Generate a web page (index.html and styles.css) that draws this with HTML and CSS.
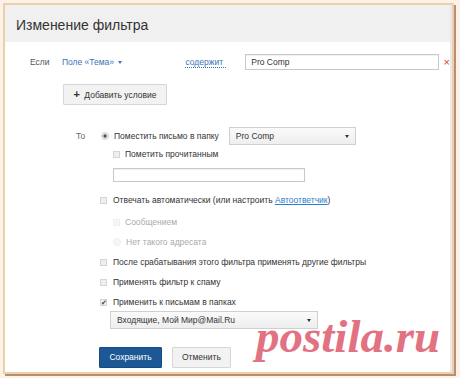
FILE: index.html
```html
<!DOCTYPE html>
<html lang="ru">
<head>
	<meta charset="UTF-8">
	<title>Изменение фильтра</title>
	<link rel="stylesheet" href="styles.css">
</head>
<body>
	<div class="frame">
		<div class="dialog">
			<div class="dialog-head">Изменение фильтра</div>

			<div class="cond-row">
				<span class="cond-label">Если</span>
				<span class="field-pick">Поле «Тема» <i class="caret"></i></span>
				<span class="op-pick">содержит</span>
				<span class="text-input cond-input">Pro Comp</span>
				<span class="remove">&times;</span>
			</div>

			<div class="add-row">
				<span class="btn btn-light add-btn"><b>+</b> Добавить условие</span>
			</div>

			<div class="action-block">
				<div class="line first-line">
					<span class="to-label">То</span>
					<span class="radio checked"></span>
					<span class="opt-text">Поместить письмо в папку</span>
					<span class="select folder-select">Pro Comp <i class="caret"></i></span>
				</div>
				<div class="line sub">
					<span class="check"></span>
					<span class="opt-text">Пометить прочитанным</span>
				</div>
				<div class="sub-input">
					<span class="text-input empty-input"></span>
				</div>
				<div class="line spaced">
					<span class="check"></span>
					<span class="opt-text">Отвечать автоматически (или настроить <a href="#">Автоответчик</a>)</span>
				</div>
				<div class="line sub disabled">
					<span class="check"></span>
					<span class="opt-text">Сообщением</span>
				</div>
				<div class="line sub disabled">
					<span class="radio"></span>
					<span class="opt-text">Нет такого адресата</span>
				</div>
				<div class="line">
					<span class="check"></span>
					<span class="opt-text">После срабатывания этого фильтра применять другие фильтры</span>
				</div>
				<div class="line">
					<span class="check"></span>
					<span class="opt-text">Применять фильтр к спаму</span>
				</div>
				<div class="line tight">
					<span class="check ticked">&#10004;</span>
					<span class="opt-text">Применить к письмам в папках</span>
				</div>
				<div class="sub-select">
					<span class="select folders-select">Входящие, Мой Мир@Mail.Ru <i class="caret"></i></span>
				</div>
			</div>

			<div class="buttons">
				<span class="btn btn-primary">Сохранить</span>
				<span class="btn btn-light">Отменить</span>
			</div>

			<div class="watermark">postila.ru</div>
		</div>
	</div>
</body>
</html>
```

FILE: styles.css
```css
* {
	margin: 0;
	padding: 0;
	box-sizing: border-box;
}
body {
	width: 460px;
	height: 378px;
	background: #fbf3ea;
	font-family: "Liberation Sans", Arial, sans-serif;
	font-size: 8.5px;
	color: #333;
	overflow: hidden;
}
.frame {
	margin: 3px 0 0 3px;
	width: 451px;
	height: 371px;
	border: 2px solid #efcfa9;
	box-shadow: 2px 2px 0 #b98f73;
}
.dialog {
	position: relative;
	height: 100%;
	overflow: hidden;
	background: #fff;
	border-right: 2px solid #e9e9e9;
}
.dialog-head {
	height: 37px;
	background: #f0f0f0;
	padding: 12px 0 0 11px;
	font-size: 14px;
	color: #333;
}

/* condition */
.cond-row {
	display: flex;
	align-items: center;
	height: 16px;
	margin-top: 12px;
}
.cond-label {
	margin-left: 25px;
	width: 32px;
	color: #555;
}
.field-pick {
	color: #3c73b8;
	width: 124px;
}
.op-pick {
	color: #3c73b8;
	border-bottom: 1px dotted #3c73b8;
	line-height: 10px;
	width: 41px;
	margin-right: 19px;
}
.cond-input {
	width: 194px;
}
.remove {
	color: #d4402f;
	font-size: 11px;
	margin-left: 5px;
}
.caret {
	display: inline-block;
	border-left: 2.5px solid transparent;
	border-right: 2.5px solid transparent;
	border-top: 3px solid #333;
	vertical-align: middle;
	margin-left: 2px;
}
.field-pick .caret {
	border-top-color: #3c73b8;
}
.text-input {
	display: block;
	height: 16px;
	border: 1px solid #c8c8c8;
	box-shadow: inset 0 1px 1px rgba(0,0,0,.06);
	padding: 2px 5px;
	color: #333;
}

/* buttons */
.add-row {
	margin: 14px 0 0 58px;
}
.btn {
	display: inline-block;
	height: 21px;
	line-height: 19px;
	padding: 0 9px;
	border: 1px solid #d6d6d6;
	border-radius: 1px;
	white-space: nowrap;
	text-align: center;
}
.btn-light {
	background: #f2f2f2;
	color: #333;
}
.add-btn {
	width: 104px;
	padding: 0;
}
.add-btn b {
	font-weight: bold;
	font-size: 11px;
	margin-right: 2px;
}
.btn-primary {
	background: #1b5895;
	border-color: #174c82;
	color: #fff;
	width: 63px;
}

/* actions */
.action-block {
	margin: 22px 0 0 0;
}
.line {
	display: flex;
	align-items: center;
	height: 12px;
	margin-bottom: 8px;
	padding-left: 95px;
}
.first-line {
	padding-left: 71px;
	height: 18px;
	margin-bottom: 3px;
}
.to-label {
	width: 25px;
	color: #666;
}
.sub {
	padding-left: 108px;
}
.line.spaced {
	margin-bottom: 10px;
}
.line.tight {
	margin-bottom: 3px;
}
.check,
.radio {
	flex: none;
	width: 7px;
	height: 7px;
	border: 1px solid #d5d5d5;
	background: #eeeeee;
	margin-right: 6px;
	font-size: 7px;
	line-height: 6px;
	text-align: center;
	color: #444;
}
.sub .check,
.sub .radio {
	margin-right: 5px;
}
.radio {
	width: 8px;
	height: 8px;
	border-radius: 50%;
	margin-right: 5px;
}
.radio.checked {
	background: radial-gradient(circle, #555 0 1.3px, #e6e6e6 2px);
}
.opt-text {
	white-space: nowrap;
	color: #333;
}
.opt-text a {
	color: #2a7ed0;
	text-decoration: underline;
}
.disabled .opt-text {
	color: #aaa;
}
.disabled .check,
.disabled .radio {
	background: #f6f6f6;
	border-color: #f0f0f0;
}
.select {
	display: flex;
	align-items: center;
	justify-content: space-between;
	height: 18px;
	padding: 0 6px;
	border: 1px solid #d0d0d0;
	background: linear-gradient(#fafafa, #eeeeee);
	color: #333;
}
.folder-select {
	width: 127px;
	margin-left: 10px;
}
.sub-input {
	padding-left: 108px;
	margin: 1px 0 12px;
}
.empty-input {
	width: 192px;
	height: 14px;
}
.sub-select {
	padding-left: 105px;
}
.folders-select {
	width: 208px;
}

.buttons {
	display: flex;
	gap: 10px;
	margin: 18px 0 0 94px;
}

.watermark {
	position: absolute;
	left: 251px;
	top: 308px;
	font-family: "Liberation Serif", serif;
	font-style: italic;
	font-weight: bold;
	font-size: 47px;
	line-height: 1;
	color: #e27282;
}
```
